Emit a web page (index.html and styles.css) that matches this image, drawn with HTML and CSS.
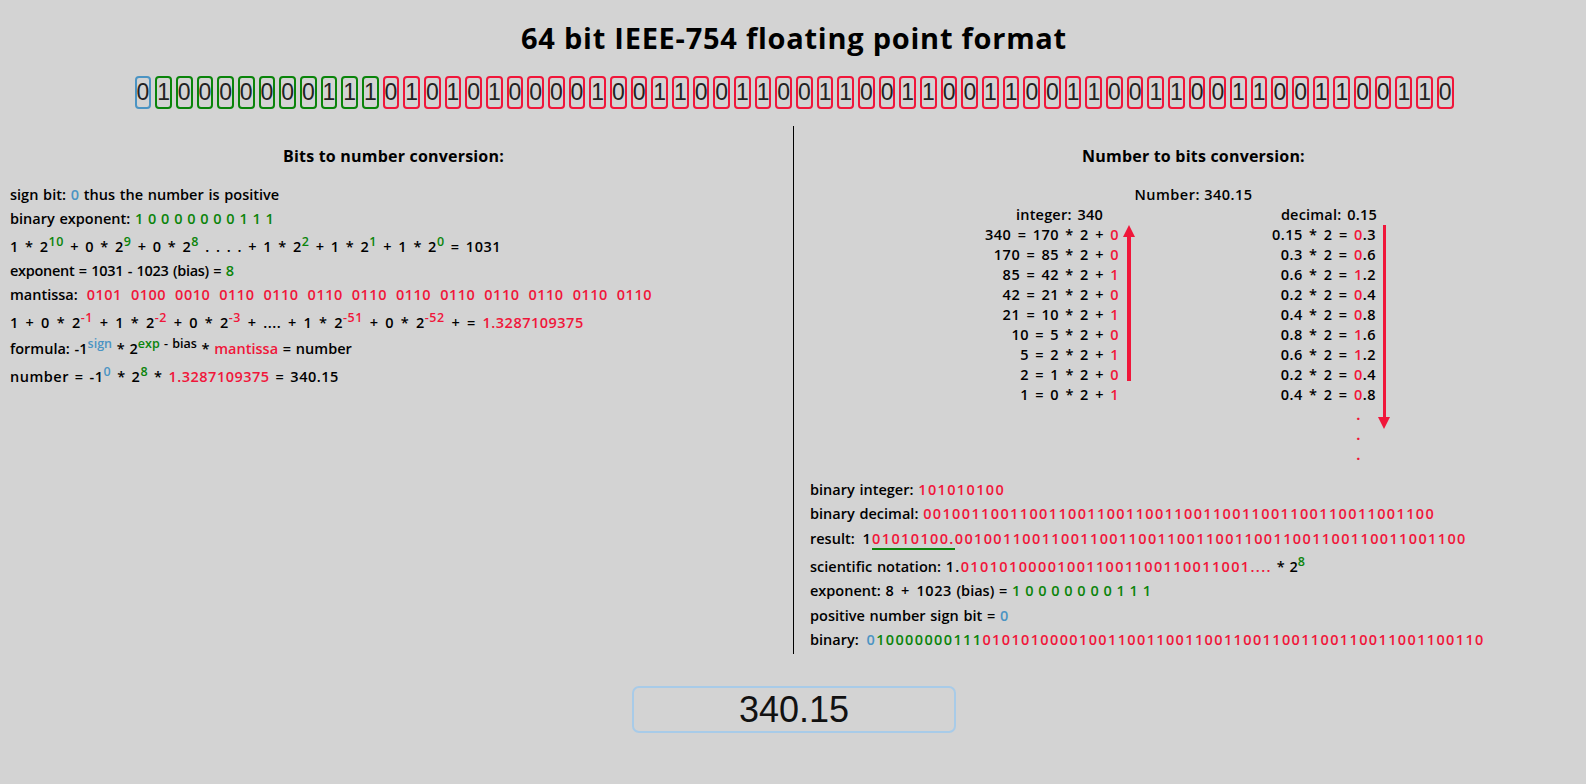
FILE: index.html
```html
<!DOCTYPE html>
<html lang="en">
<head>
    <meta charset="UTF-8">
    <title>64 bit IEEE-754 floating point format</title>
    <link rel="stylesheet" href="styles.css">
</head>
<body>
<h1 class="title">64 bit IEEE-754 floating point format</h1>
<div class="bits">
    <span class="bit sign">0</span>
    <span class="bit exp">1</span><span class="bit exp">0</span><span class="bit exp">0</span><span class="bit exp">0</span><span class="bit exp">0</span><span class="bit exp">0</span><span class="bit exp">0</span><span class="bit exp">0</span><span class="bit exp">1</span><span class="bit exp">1</span><span class="bit exp">1</span>
    <span class="bit man">0</span><span class="bit man">1</span><span class="bit man">0</span><span class="bit man">1</span>
    <span class="bit man">0</span><span class="bit man">1</span><span class="bit man">0</span><span class="bit man">0</span>
    <span class="bit man">0</span><span class="bit man">0</span><span class="bit man">1</span><span class="bit man">0</span>
    <span class="bit man">0</span><span class="bit man">1</span><span class="bit man">1</span><span class="bit man">0</span>
    <span class="bit man">0</span><span class="bit man">1</span><span class="bit man">1</span><span class="bit man">0</span>
    <span class="bit man">0</span><span class="bit man">1</span><span class="bit man">1</span><span class="bit man">0</span>
    <span class="bit man">0</span><span class="bit man">1</span><span class="bit man">1</span><span class="bit man">0</span>
    <span class="bit man">0</span><span class="bit man">1</span><span class="bit man">1</span><span class="bit man">0</span>
    <span class="bit man">0</span><span class="bit man">1</span><span class="bit man">1</span><span class="bit man">0</span>
    <span class="bit man">0</span><span class="bit man">1</span><span class="bit man">1</span><span class="bit man">0</span>
    <span class="bit man">0</span><span class="bit man">1</span><span class="bit man">1</span><span class="bit man">0</span>
    <span class="bit man">0</span><span class="bit man">1</span><span class="bit man">1</span><span class="bit man">0</span>
    <span class="bit man">0</span><span class="bit man">1</span><span class="bit man">1</span><span class="bit man">0</span>
</div>

<div class="panes">
    <div class="pane left-pane">
        <h2 class="pane-title">Bits to number conversion:</h2>
        <p class="line">sign bit: <span class="blue">0</span> thus the number is positive</p>
        <p class="line">binary exponent: <span class="green">1 0 0 0 0 0 0 0 1 1 1</span></p>
        <p class="line tall math narrow">1 * 2<sup class="green">10</sup> + 0 * 2<sup class="green">9</sup> + 0 * 2<sup class="green">8</sup> . . . . + 1 * 2<sup class="green">2</sup> + 1 * 2<sup class="green">1</sup> + 1 * 2<sup class="green">0</sup> = 1031</p>
        <p class="line tight">exponent = 1031 - 1023 (bias) = <span class="green">8</span></p>
        <p class="line">mantissa:<span class="red group">0101</span><span class="red group">0100</span><span class="red group">0010</span><span class="red group">0110</span><span class="red group">0110</span><span class="red group">0110</span><span class="red group">0110</span><span class="red group">0110</span><span class="red group">0110</span><span class="red group">0110</span><span class="red group">0110</span><span class="red group">0110</span><span class="red group">0110</span></p>
        <p class="line tall math">1 + 0 * 2<sup class="red">-1</sup> + 1 * 2<sup class="red">-2</sup> + 0 * 2<sup class="red">-3</sup> + .... + 1 * 2<sup class="red">-51</sup> + 0 * 2<sup class="red">-52</sup> + = <span class="red">1.3287109375</span></p>
        <p class="line formula">formula: -1<sup class="blue">sign</sup> * 2<sup class="green">exp</sup><sup> - bias</sup> * <span class="red">mantissa</span> = number</p>
        <p class="line tall math closer">number = -1<sup class="blue">0</sup> * 2<sup class="green">8</sup> * <span class="red">1.3287109375</span> = 340.15</p>
    </div>

    <div class="pane right-pane">
        <h2 class="pane-title">Number to bits conversion:</h2>
        <div class="number">Number: 340.15</div>
        <div class="division">
            <div class="col int-col">
                <div class="col-head">integer: 340</div>
                <div>340 = 170 * 2 + <span class="red">0</span></div>
                <div>170 = 85 * 2 + <span class="red">0</span></div>
                <div>85 = 42 * 2 + <span class="red">1</span></div>
                <div>42 = 21 * 2 + <span class="red">0</span></div>
                <div>21 = 10 * 2 + <span class="red">1</span></div>
                <div>10 = 5 * 2 + <span class="red">0</span></div>
                <div>5 = 2 * 2 + <span class="red">1</span></div>
                <div>2 = 1 * 2 + <span class="red">0</span></div>
                <div>1 = 0 * 2 + <span class="red">1</span></div>
                <svg class="arrow arrow-up" width="14" height="156" viewBox="0 0 14 156"><rect x="5" y="10" width="4" height="146" fill="#f0163a"/><path d="M1 12 L7 0 L13 12 Z" fill="#f0163a"/></svg>
            </div>
            <div class="col dec-col">
                <div class="col-head">decimal: 0.15</div>
                <div>0.15 * 2 = <span class="red">0</span>.3</div>
                <div>0.3 * 2 = <span class="red">0</span>.6</div>
                <div>0.6 * 2 = <span class="red">1</span>.2</div>
                <div>0.2 * 2 = <span class="red">0</span>.4</div>
                <div>0.4 * 2 = <span class="red">0</span>.8</div>
                <div>0.8 * 2 = <span class="red">1</span>.6</div>
                <div>0.6 * 2 = <span class="red">1</span>.2</div>
                <div>0.2 * 2 = <span class="red">0</span>.4</div>
                <div>0.4 * 2 = <span class="red">0</span>.8</div>
                <div class="dot red">.</div>
                <div class="dot red">.</div>
                <div class="dot red">.</div>
                <svg class="arrow arrow-down" width="12" height="204" viewBox="0 0 12 204"><rect x="5" y="0" width="3" height="194" fill="#f0163a"/><path d="M0 192 L12 192 L6 204 Z" fill="#f0163a"/></svg>
            </div>
        </div>
        <div class="steps">
            <p class="line">binary integer: <span class="red num">101010100</span></p>
            <p class="line">binary decimal: <span class="red num">00100110011001100110011001100110011001100110011001100</span></p>
            <p class="line nudge wide">result: <span class="num">1</span><span class="red num"><span class="shift">01010100.</span>00100110011001100110011001100110011001100110011001100</span></p>
            <p class="line tall">scientific notation: <span class="num">1.</span><span class="red num">010101000010011001100110011001....</span> * 2<sup class="green">8</sup></p>
            <p class="line">exponent: <span class="math">8 + 1023</span> (bias) = <span class="green">1 0 0 0 0 0 0 0 1 1 1</span></p>
            <p class="line nudge">positive number sign bit = <span class="blue">0</span></p>
            <p class="line wide">binary: <span class="blue num">0</span><span class="green num">10000000111</span><span class="red num">0101010000100110011001100110011001100110011001100110</span></p>
        </div>
    </div>
</div>

<div class="entry">
    <input class="number-input" type="text" value="340.15">
</div>
</body>
</html>
```

FILE: styles.css
```css
* {
    padding: 0;
    margin: 0;
    box-sizing: border-box;
}

body {
    background: #d3d3d3;
    color: #000;
    font-family: "Open Sans", sans-serif;
    font-size: 14.5px;
    font-weight: 600;
    overflow: hidden;
}

.blue {
    color: #4b94c3;
}

.green {
    color: #0a840a;
}

.red {
    color: #f0163a;
}

.title {
    font-size: 29px;
    font-weight: 700;
    text-align: center;
    line-height: 38px;
    padding-top: 19px;
    padding-left: 2px;
    letter-spacing: 0.75px;
}

.bits {
    display: flex;
    justify-content: center;
    gap: 4px;
    margin-top: 19px;
    padding-left: 2px;
}

.bit {
    width: 16.68px;
    height: 33px;
    border: 2px solid;
    border-radius: 4px;
    font-family: "Liberation Sans", sans-serif;
    font-size: 23px;
    font-weight: 400;
    line-height: 29px;
    text-align: center;
    color: #222;
}

.bit.sign {
    border-color: #4b94c3;
}

.bit.exp {
    border-color: #0a840a;
}

.bit.man {
    border-color: #f0163a;
}

.panes {
    display: flex;
    margin-top: 17px;
    height: 528px;
}

.left-pane {
    width: 794px;
    padding-left: 10px;
    border-right: 1px solid #000;
}

.right-pane {
    flex: 1;
    padding-left: 16px;
}

.pane-title {
    font-size: 16px;
    font-weight: 700;
    text-align: center;
    line-height: 20px;
    padding-top: 20px;
    padding-right: 16px;
    margin-bottom: 19px;
    letter-spacing: 0.2px;
}

.right-pane .pane-title {
    padding-right: 9px;
}

.line {
    line-height: 20px;
    margin-bottom: 4px;
    word-spacing: 1px;
    white-space: nowrap;
}

.line sup {
    font-size: 12.5px;
    line-height: 0;
    font-weight: 600;
}

.tall {
    margin-top: 8px;
}

.formula {
    margin-top: 6px;
}

.nudge {
    margin-top: 5px;
}

.tight {
    letter-spacing: -0.3px;
}

.math {
    letter-spacing: 0.5px;
    word-spacing: 2.5px;
}

.math.narrow {
    word-spacing: 2px;
}

.math.closer {
    word-spacing: 1.7px;
}

.wide {
    word-spacing: 4px;
}

.num {
    letter-spacing: 1.37px;
}

.group {
    margin-left: 9px;
    letter-spacing: 0.5px;
}

.number {
    text-align: center;
    line-height: 20px;
    padding-right: 9px;
    letter-spacing: 0.5px;
}

.division {
    display: flex;
    height: 275px;
}

.col {
    position: relative;
    line-height: 20px;
    text-align: right;
    letter-spacing: 0.5px;
    word-spacing: 2px;
}

.int-col {
    width: 309px;
}

.dec-col {
    width: 257px;
}

.int-col .col-head {
    padding-right: 16px;
    letter-spacing: 0.2px;
}

.dec-col .col-head {
    margin-right: -1px;
    letter-spacing: 0.2px;
}

.dot {
    padding-right: 15px;
    font-weight: 700;
}

.arrow {
    position: absolute;
    top: 20px;
}

.arrow-up {
    left: 312px;
}

.arrow-down {
    left: 259px;
}

.shift {
    border-bottom: 2px solid #0a840a;
}

.entry {
    display: flex;
    justify-content: center;
    margin-top: 32px;
    padding-left: 2px;
}

.number-input {
    width: 324px;
    height: 47px;
    border: 2px solid #a8cbe8;
    border-radius: 7px;
    background: transparent;
    font-family: "Liberation Sans", sans-serif;
    font-size: 36px;
    text-align: center;
    color: #111;
    outline: none;
}
```
